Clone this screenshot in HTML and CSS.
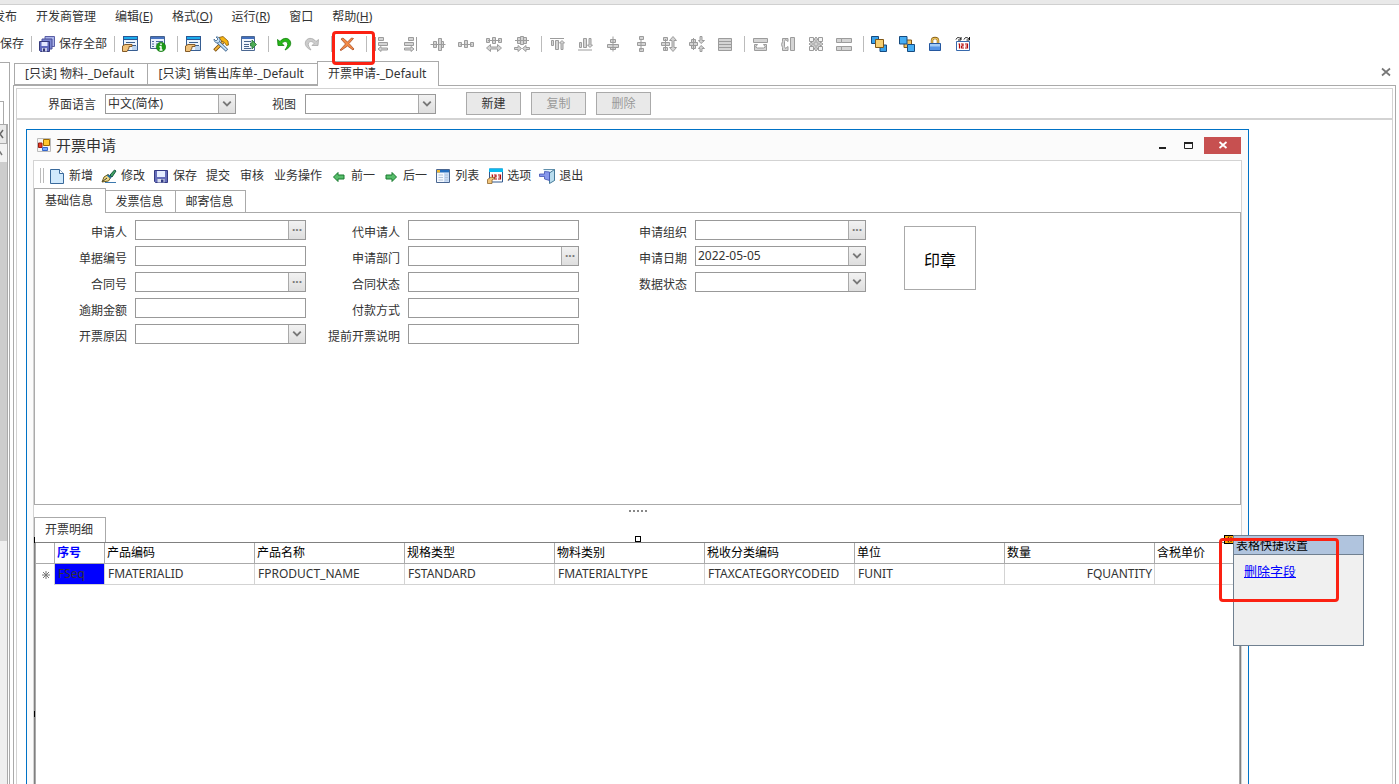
FILE: index.html
```html
<!DOCTYPE html>
<html lang="zh-CN">
<head>
<meta charset="utf-8">
<title>开票申请-_Default</title>
<link rel="stylesheet" href="styles.css">
</head>
<body>
<div class="top-strip"></div>
<nav class="menu">
  <button>发布</button><button>开发商管理</button><button>编辑(<u>E</u>)</button><button>格式(<u>O</u>)</button><button>运行(<u>R</u>)</button><button>窗口</button><button>帮助(<u>H</u>)</button>
</nav>
<div class="toolbar">
  <button class="text-tool">保存</button><i class="sep"></i>
  <button class="save-all"><svg class="icon" viewBox="0 0 16 16"><path d="M6 .5h9.500v10H6z" fill="#a9b3ea" stroke="#5b5fa5"/><path d="M3 3h10v10H3z" fill="#7d88d2" stroke="#4a4e96"/><path d="M.5 5.500h10v10H1.500l-1-1z" fill="#6069bd" stroke="#363a7c"/><path d="M2.500 6h6v4h-6z" fill="#e3e8ff"/><path d="M3 12h5v3.500H3z" fill="#c8cbe8"/><path d="M4 12.500h2v3H4z" fill="#333771"/></svg>保存全部</button><i class="sep"></i>
  <button class="tool" aria-label="属性"><svg class="icon" viewBox="0 0 16 16"><use href="#form-hand"/></svg></button>
  <button class="tool" aria-label="信息"><svg class="icon" viewBox="0 0 16 16"><path d="M.5.500h14v12H.5z" fill="#e9f1fc" stroke="#44618d"/><path d="M1 1h13v2H1z" fill="#4773c1"/><path d="M2 5.500h2M2 8h2M2 10.500h2M6 5.500h7M6 8h3" stroke="#4b699c"/><circle cx="11" cy="11" r="4.700" fill="#1c9a18" stroke="#0c6c0c" stroke-width=".6"/><path d="M11 7.500v1.800M11 10.200v4M9.500 14h3M9.500 10.700H11" stroke="#fff" stroke-width="1.500"/></svg></button><i class="sep"></i>
  <button class="tool" aria-label="表单"><svg class="icon" viewBox="0 0 16 16"><use href="#form-hand"/></svg></button>
  <button class="tool" aria-label="工具"><svg class="icon" viewBox="0 0 16 16"><path d="M1.500 14.500L10 6" stroke="#7a4b08" stroke-width="3.500"/><path d="M2 14L10 6" stroke="#f2b53a" stroke-width="1.800"/><path d="M6 1.500l4-1 5 4.500.5 4-2 .5-2-3-3.500-2z" fill="#f7b411" stroke="#80560b" stroke-width=".8"/><path d="M4 5l10 9.500" stroke="#3a638e" stroke-width="3.400"/><path d="M4 5l9.500 9" stroke="#c9e2f7" stroke-width="1.800"/><path d="M1 3l2 2 2-2-2-2c3-.5 5 2 3.500 5C4 8 1 6.500 1 3z" fill="#c9e2f7" stroke="#3a638e" stroke-width=".8"/></svg></button>
  <button class="tool" aria-label="导出"><svg class="icon" viewBox="0 0 16 16"><path d="M.5.500h13v14H.5z" fill="#f1f6fd" stroke="#4c6892"/><path d="M1 1h12v2H1z" fill="#426fbd"/><path d="M3 5.500h7M3 8.500h5M3 10.500h5M3 12.500h7" stroke="#48648e"/><path d="M9.500 7h1.500V4l4.500 4.500L11 13v-3H9.500z" fill="#4eae55" stroke="#247138" stroke-width=".8"/></svg></button><i class="sep"></i>
  <button class="tool" aria-label="撤销"><svg class="icon" viewBox="0 0 16 16"><use href="#undo" fill="#27b817" stroke="#11800c"/></svg></button>
  <button class="tool" aria-label="重做" disabled><svg class="icon" viewBox="0 0 16 16"><use href="#undo" fill="#ccc" stroke="#aaa" transform="matrix(-1 0 0 1 16 0)"/></svg></button><i class="sep"></i>
  <div class="marked"><button class="tool" aria-label="删除字段"><svg class="icon" viewBox="0 0 16 16"><path d="M2 3l2-1 4.500 4L12.500 2l2 .5-4.500 5L15 13l-1 1-5.500-4L2 14.500l-1-.5L6.500 8z" fill="#f48a45" stroke="#a94f27" stroke-width=".8"/></svg></button><i class="sep"></i></div>
  <div class="grey-tools">
  <button class="tool" aria-label="左对齐"><svg class="icon" viewBox="0 0 16 16"><path d="M1.500 1v14M4.500 1.500h5v3h-5zM4.500 6.500h9v3h-9zM7 10.500L4 13l3 2.500V14h6.500v-2H7z"/></svg></button>
  <button class="tool" aria-label="右对齐"><svg class="icon" viewBox="0 0 16 16"><path d="M14.500 1v14M6.500 1.500h5v3h-5zM2.500 6.500h9v3h-9zM9 10.500l3 2.500-3 2.500V14H2.500v-2H9z"/></svg></button>
  <button class="tool" aria-label="水平居中"><svg class="icon" viewBox="0 0 16 16"><path d="M.5 8.500h15M3.500 5.500h3v6h-3zM8.500 2.500h3v12h-3zM11.500 5.500h2v6h-2z"/></svg></button>
  <button class="tool" aria-label="水平间距"><svg class="icon" viewBox="0 0 16 16"><path d="M2.500 8.500h11M.5 6.500h3v4h-3zM6.500 4.500h3v7h-3zM12.500 6.500h3v4h-3z"/></svg></button>
  <button class="tool" aria-label="增加水平间距"><svg class="icon" viewBox="0 0 16 16"><path d="M2 4.500h12M.5 2.500h3v4h-3zM6.500 1.500h3v6h-3zM12.500 2.500h3v4h-3zM4.500 8.500L.5 12l4 3.500V13h7v2.500l4-3.500-4-3.500V11h-7z"/></svg></button>
  <button class="tool" aria-label="减少水平间距"><svg class="icon" viewBox="0 0 16 16"><path d="M1 4.500h14M3.500 1.500h3v6h-3zM6.500.500h3v8h-3zM9.500 1.500h3v6h-3zM4 9.500L7.500 12.500 4 15.500V13.500H.5v-2H4zM12 9.500l-3.500 3 3.500 3v-2h3.500v-2H12z"/></svg></button><i class="sep"></i>
  <button class="tool" aria-label="顶端对齐"><svg class="icon" viewBox="0 0 16 16"><path d="M1 2.500h14M2.500 4.500h2v5h-2zM6.500 4.500h3v9h-3zM10.500 7L13 4.500 15.500 7H14v6.500h-2V7z"/></svg></button>
  <button class="tool" aria-label="底端对齐"><svg class="icon" viewBox="0 0 16 16"><path d="M1 14h14M2.500 6.500h2v5h-2zM6.500 2.500h3v9h-3zM10.500 9l2.500 2.500L15.500 9H14V2.500h-2V9z"/></svg></button>
  <button class="tool" aria-label="垂直居中"><svg class="icon" viewBox="0 0 16 16"><path d="M8 .5v15M5.500 3.500h5v3h-5zM2.500 8.500h11v3h-11zM5.500 11.500h5v2h-5z"/></svg></button>
  <button class="tool" aria-label="垂直间距"><svg class="icon" viewBox="0 0 16 16"><path d="M8 3v11M6.500.500h4v3h-4zM4.500 6.500h8v3h-8zM6.500 12.500h4v3h-4z"/></svg></button>
  <button class="tool" aria-label="增加垂直间距"><svg class="icon" viewBox="0 0 16 16"><path d="M4.500 3v11M2.500 1.500h4v3h-4zM.5 6.500h8v3h-8zM2.500 11.500h4v3h-4zM12 .5L15.500 4.500H13v7h2.500L12 15.500 8.500 11.500H11v-7H8.500z"/></svg></button>
  <button class="tool" aria-label="减少垂直间距"><svg class="icon" viewBox="0 0 16 16"><path d="M4.500 2v12M2.500 3.500h4v3h-4zM.5 6.500h8v3h-8zM2.500 9.500h4v3h-4zM12 7.500L9.500 4.500H11v-4h2v4h2.500zM12 9.500l3.500 3H13v3h-2v-3H9.500z"/></svg></button>
  <button class="tool" aria-label="相同行高"><svg class="icon" viewBox="0 0 16 16"><path d="M1.500 2.500h13v12h-13zM1.500 5.500h13M1.500 8.500h13M1.500 11.500h13"/></svg></button><i class="sep"></i>
  <button class="tool" aria-label="相同宽度"><svg class="icon" viewBox="0 0 16 16"><path d="M1.500 2.500h14v4h-14z"/><path d="M2.500 8.500h3l-2 2.500 2 1h6l2-1-2-2.500h3v6h-12z"/></svg></button>
  <button class="tool" aria-label="相同高度"><svg class="icon" viewBox="0 0 16 16"><path d="M10.500 1.500h4v13h-4z"/><path d="M8 2.500v3L5.500 3.500l-1 2v5l1 2L8 10.500v4H2.500v-3l-1-3 1-3v-3z"/></svg></button>
  <button class="tool" aria-label="相同大小"><svg class="icon" viewBox="0 0 16 16"><path class="hollow" d="M1.500 1.500h4v4h-4zM10.500 1.500h4v4h-4zM1.500 10.500h4v4h-4zM10.500 10.500h4v4h-4z"/><path d="M8 1l2 2.500H9V7h3.500V6L15 8l-2.500 2V9H9v3.500h1L8 15l-2-2.500h1V9H3.500v1L1 8l2.500-2v1H7V3.500H6z"/></svg></button>
  <button class="tool" aria-label="分组"><svg class="icon" viewBox="0 0 16 16"><path d="M.5 2.500h5v4h-5zM5.500 2.500h10v4h-10zM.5 10.500h5v4h-5zM5.500 10.500h10v4h-10z"/></svg></button><i class="sep"></i>
  </div>
  <button class="tool" aria-label="置于顶层"><svg class="icon" viewBox="0 0 16 16"><path d="M.5.500h7v7h-7zM9 9h6.500v6.500H9z" fill="#38a1eb" stroke="#164b80"/><path d="M4.500 3.500h8v8h-8z" fill="#f6cf72" stroke="#805715"/></svg></button>
  <button class="tool" aria-label="置于底层"><svg class="icon" viewBox="0 0 16 16"><path d="M5 4h7.500v7.500H5z" fill="#f3c260" stroke="#805715"/><path d="M.5.500h7.500V8H.5zM8.500 8.500h7v7h-7z" fill="#47aef3" stroke="#164b80"/></svg></button>
  <button class="tool" aria-label="锁定"><svg class="icon" viewBox="0 0 16 16"><path d="M5 8V4.500C5 1 11 1 11 4.500V8" fill="none" stroke="#8c6417" stroke-width="2.500"/><path d="M5 8V4.500C5 1.500 11 1.500 11 4.500V8" fill="none" stroke="#efc65e" stroke-width="1.200"/><path d="M2.500 7.500h11v7h-11z" fill="#5593e5" stroke="#24579f"/><path d="M3 8h10v2.500H3z" fill="#a3cbf7"/></svg></button>
  <button class="tool" aria-label="Tab键顺序"><svg class="icon" viewBox="0 0 16 16"><path d="M1 3.500C2 1 4 1 6 3M6 1v3H3M9 3.500c1-2.500 3-2.500 5-.5M14.500 1v3h-3" fill="none" stroke="#111"/><path d="M1.500 5.500h13v9h-13z" fill="#fff" stroke="#3669ac"/><use href="#digits"/></svg></button>
</div>

<div class="workspace">
  <aside class="side"><div class="side-pane"><div class="side-head"></div><button class="side-close" aria-label="关闭面板"><svg viewBox="0 0 7 18"><path d="M3 5L0 9l3 4" fill="none" stroke="#666" stroke-width="1.500"/></svg></button><div class="scroll-up"><svg viewBox="0 0 7 18"><path d="M-2 10l2-2 2 3" fill="none" stroke="#777" stroke-width="1.500"/></svg></div><div class="thumb"></div></div></aside>
  <main class="document">
    <div class="doc-tabs"><button class="doc-tab">[只读] 物料-_Default</button><button class="doc-tab">[只读] 销售出库单-_Default</button><button class="doc-tab active">开票申请-_Default</button><button class="doc-close" aria-label="关闭"><svg viewBox="0 0 10 10"><path d="M1 1.500l8 7M9 1.500l-8 7" stroke="#777" stroke-width="1.700"/></svg></button></div>
    <div class="doc-frame"><div class="doc-body">
      <div class="language-bar">
        <label for="lang">界面语言</label><div class="combo bar-combo"><select id="lang"><option>中文(简体)</option></select><svg class="arrow" viewBox="0 0 17 18"><use href="#chevron"/></svg></div>
        <label for="view" class="view-label">视图</label><div class="combo bar-combo"><select id="view"><option></option></select><svg class="arrow" viewBox="0 0 17 18"><use href="#chevron"/></svg></div>
        <div class="bar-actions"><button>新建</button><button disabled>复制</button><button disabled>删除</button></div>
      </div>
      <div class="canvas">
        <section class="window">
          <header class="title-bar">
            <svg class="app-icon" viewBox="0 0 14 14"><path d="M.5.500h13v13H.5z" fill="#f5f5f5" stroke="#bbb"/><path d="M6.500 1.500h6v6h-6z" fill="#ffc72d" stroke="#9b6a00"/><path d="M1.500 5h3.500v4.500H1.500z" fill="#e63b24" stroke="#971a10"/><path d="M5.500 9.500h5v3h-5z" fill="#75a9ff" stroke="#3366cb"/></svg>
            <h1>开票申请</h1>
            <button class="win-button" aria-label="最小化"><svg viewBox="0 0 10 10"><path d="M2 8h7" stroke="#222" stroke-width="2"/></svg></button><button class="win-button" aria-label="最大化"><svg viewBox="0 0 10 10"><path d="M.5 2.500h8v6h-8z" fill="none" stroke="#222"/><path d="M0 3h9" stroke="#222" stroke-width="2"/></svg></button><button class="win-close" aria-label="关闭窗口"><svg viewBox="0 0 10 10"><path d="M1.500 2l7 6M8.500 2l-7 6" stroke="#fff" stroke-width="1.800"/></svg></button>
          </header>
          <div class="window-body">
            <div class="form-toolbar"><i class="grip"></i>
              <button class="with-icon"><svg class="icon" viewBox="0 0 16 16"><path d="M1.500 1.500h9l4 4v10h-13z" fill="#d0e9fc" stroke="#39699b"/><path d="M10.500 1.500v4h4" fill="#fff" stroke="#39699b"/></svg>新增</button>
              <button class="with-icon"><svg class="icon" viewBox="0 0 16 16"><path d="M4 14.500h11" stroke="#3c79ae"/><path d="M9 7l4.500-5 1.500 1-4 6z" fill="#43a463" stroke="#155944"/><path d="M1 14l2-5 4-2.500L10 9l-2.500 4z" fill="#f2dc87" stroke="#6e5b19"/><path d="M1.500 13.500L6 10" stroke="#333"/><path d="M6.500 7l3.500 3" stroke="#226da0" stroke-width="2"/></svg>修改</button>
              <button class="with-icon"><svg class="icon" viewBox="0 0 16 16"><path d="M1.500 2.500h13v12h-12l-1-1z" fill="#656db9" stroke="#343a84"/><path d="M4 3h8v6H4z" fill="#e5edff"/><path d="M4.500 11h7v3.500h-7z" fill="#dbe0ee"/><path d="M8 11.500h2.500v3H8z" fill="#323a81"/></svg>保存</button>
              <button>提交</button><button>审核</button><button>业务操作</button>
              <button class="with-icon"><svg class="icon" viewBox="0 0 16 16"><use href="#go-left"/></svg>前一</button>
              <button class="with-icon"><svg class="icon" viewBox="0 0 16 16"><use href="#go-left" transform="matrix(-1 0 0 1 16 0)"/></svg>后一</button>
              <button class="with-icon"><svg class="icon" viewBox="0 0 16 16"><path d="M1.500 1.500h13v13h-13z" fill="#f3f8ff" stroke="#4a6690"/><path d="M2 2h12v2.500H2z" fill="#226dbf"/><path d="M2 2h3v2.500H2z" fill="#f0b529"/><path d="M9 5h5v9H9z" fill="#c8dcf7"/><path d="M3.500 7H8M3.500 9.500H8M3.500 12H8M10 7h3M10 9.500h3M10 12h3" stroke="#b4c4da"/></svg>列表</button>
              <button class="with-icon"><svg class="icon" viewBox="0 0 16 16"><path d="M2.500 1h13v13h-13z" fill="#fff" stroke="#31598e"/><path d="M2 .5h14V4H2z" fill="#08baf0"/><use href="#digits" transform="translate(1 -1)"/><path d="M.5 15.500v-4L4 9l4 1-3 2v3.500z" fill="#f0c47b" stroke="#8e652c" stroke-width=".8"/></svg>选项</button>
              <button class="with-icon"><svg class="icon" viewBox="0 0 16 16"><path d="M4.500 1.500h11v11h-5" fill="#e1f2fc" stroke="#6190ac"/><path d="M15.500 1.500v11l-5 3V5z" fill="#b9ddee" stroke="#477b99"/><path d="M5.500 3.500V6H.5v2.500h5V11l5 1.500V4z" fill="#8798ed" stroke="#4051b0" stroke-width=".8"/></svg>退出</button>
            </div>
            <div class="form-tabs"><button class="active">基础信息</button><button>发票信息</button><button>邮寄信息</button></div>
            <div class="form-panel">
              <div class="fields first">
                <label for="a1">申请人</label><div class="lookup"><input id="a1"><button aria-label="选择申请人">···</button></div>
                <label for="a2">单据编号</label><input class="box" id="a2">
                <label for="a3">合同号</label><div class="lookup"><input id="a3"><button aria-label="选择合同">···</button></div>
                <label for="a4">逾期金额</label><input class="box" id="a4">
                <label for="a5">开票原因</label><div class="combo"><select id="a5"><option></option></select><svg class="arrow" viewBox="0 0 17 18"><use href="#chevron"/></svg></div>
              </div>
              <div class="fields second">
                <label for="b1">代申请人</label><input class="box" id="b1">
                <label for="b2">申请部门</label><div class="lookup"><input id="b2"><button aria-label="选择部门">···</button></div>
                <label for="b3">合同状态</label><input class="box" id="b3">
                <label for="b4">付款方式</label><input class="box" id="b4">
                <label for="b5">提前开票说明</label><input class="box" id="b5">
              </div>
              <div class="fields third">
                <label for="c1">申请组织</label><div class="lookup"><input id="c1"><button aria-label="选择组织">···</button></div>
                <label for="c2">申请日期</label><div class="combo"><select id="c2"><option>2022-05-05</option></select><svg class="arrow" viewBox="0 0 17 18"><use href="#chevron"/></svg></div>
                <label for="c3">数据状态</label><div class="combo"><select id="c3"><option></option></select><svg class="arrow" viewBox="0 0 17 18"><use href="#chevron"/></svg></div>
              </div>
              <div class="stamp">印章</div>
            </div>
            <div class="splitter"><i></i><i></i><i></i><i></i><i></i></div>
            <div class="detail-tabs"><button>开票明细</button></div>
            <div class="detail">
              <i class="handle corner"></i><i class="handle middle"></i><i class="handle side-handle"></i>
              <table>
                <colgroup><col class="c-mark"><col class="c-seq"><col class="c-data"><col class="c-data"><col class="c-data"><col class="c-data"><col class="c-data"><col class="c-data"><col class="c-data"><col></colgroup>
                <thead><tr><th></th><th class="seq">序号</th><th>产品编码</th><th>产品名称</th><th>规格类型</th><th>物料类别</th><th>税收分类编码</th><th>单位</th><th>数量</th><th>含税单价</th></tr></thead>
                <tbody><tr><td class="mark"><svg viewBox="0 0 8 8"><path d="M4 0v8M0 4h8M1 1l6 6M7 1L1 7" stroke="#777"/></svg></td><td class="selected">FSeq</td><td>FMATERIALID</td><td>FPRODUCT_NAME</td><td>FSTANDARD</td><td>FMATERIALTYPE</td><td>FTAXCATEGORYCODEID</td><td>FUNIT</td><td class="number">FQUANTITY</td><td></td></tr></tbody>
              </table>
              <button class="smart-tag" aria-label="快捷设置"><svg viewBox="0 0 8 7"><path d="M4 .5L2 3.500l2 3M6 1v1M6 5v1" fill="none" stroke="#222"/></svg></button>
              <div class="popup"><h2>表格快捷设置</h2><a href="#">删除字段</a></div>
              <div class="popup-mark"></div>
            </div>
          </div>
        </section>
      </div>
    </div></div>
  </main>
</div>

<svg class="defs" aria-hidden="true"><defs>
  <g id="form-hand"><path d="M1.500.500h14v14h-14z" fill="#edf5fd" stroke="#365d91"/><path d="M1 0h15v4H1z" fill="#2b5693"/><path d="M2 1h13v2H2z" fill="#1baced"/><path d="M4 6.500h9M9 9.500h5" stroke="#3c5f8c"/><path d="M10 10h5v4h-5z" fill="#bcd4ee"/><path d="M.5 15.500V10L3 8.500h7v2H7V12L5 15.500z" fill="#f0c27a" stroke="#845b28"/></g>
  <path id="undo" stroke-width=".8" d="M1.500 3.500l.5 6h6L6 7.500C7.500 5 10.500 5 11.500 7c.8 2-.5 4-2.500 7 4-1.500 6.500-5 5.500-8C13.300 1.500 7.500 1 4 5.500z"/>
  <path id="chevron" d="M4.500 6.500l4 4 4-4" fill="none" stroke="#777" stroke-width="2"/>
  <path id="digits" d="M4.500 7.500v5M3.500 8h1M6 8h2v2H6.500v2H9M10 8h2.500v4H10M10.500 10h2" fill="none" stroke="#b50d0d" stroke-width="1.200"/>
  <path id="go-left" d="M7 4.500L2.500 9 7 13.500V11h6V7H7z" fill="#57bd6b" stroke="#187a2f"/>
</defs></svg>
</body>
</html>
```
FILE: styles.css
```css
*, *::before, *::after { box-sizing: border-box; }
html { height: 100%; }
body { margin: 0; height: 100%; display: flex; flex-direction: column; overflow: hidden; background: #fff; color: #333; font: 12px/18px "Noto Sans", "Noto Sans CJK SC", sans-serif; }
button, input, select { font: inherit; color: inherit; margin: 0; padding: 0; border: 0; border-radius: 0; background: none; }
button { white-space: nowrap; flex: none; }
svg { display: block; flex: none; }
.defs { width: 0; height: 0; position: absolute; }
.icon { width: 16px; height: 16px; }

.top-strip { flex: none; height: 5px; background: #e9e9e9; border-bottom: 1px solid #d0d0d0; }
.menu { flex: none; display: flex; gap: 19px; margin-left: -7px; padding-top: 3px; height: 25px; }
.menu button { height: 18px; }
.toolbar { flex: none; height: 31px; padding-bottom: 4px; display: flex; align-items: center; }
.grey-tools { display: flex; align-items: center; }
.grey-tools path { fill: #d4d4d4; stroke: #9c9c9c; }
.grey-tools .hollow { fill: #f4f4f4; }
.tool { width: 28px; height: 26px; display: flex; align-items: center; justify-content: center; }
.text-tool { width: 26px; text-align: left; }
.save-all { width: 76px; padding-left: 6px; display: flex; gap: 4px; align-items: center; }
.sep { flex: none; width: 7px; height: 16px; background: linear-gradient(#bbb, #bbb) 5px 0 / 1px 16px no-repeat; }
.marked { position: relative; display: flex; align-items: center; }
.marked::after { content: ""; position: absolute; left: -1px; top: 0; width: 43px; height: 34px; border: 3px solid #fb2112; border-radius: 4px; z-index: 2; }

.workspace { flex: 1; min-height: 0; display: flex; padding-right: 3px; }
.side { flex: none; width: 10px; margin-top: 1px; margin-right: 3px; border: 1px solid #aaa; border-left: 0; border-bottom: 0; }
.side-pane { height: 100%; width: 8px; background: #efefef; border-right: 1px solid #aaa; display: flex; flex-direction: column; }
.side-head { flex: none; height: 61px; margin-right: -1px; background: linear-gradient(#aaa, #aaa) 0 38px / 4px 1px no-repeat, linear-gradient(#aaa, #aaa) 3px 38px / 1px 23px no-repeat #fff; }
.side-close { height: 20px; border: 1px solid #aaa; border-left: 0; background: #e9e9e9; }
.side svg { width: 7px; height: 18px; }
.scroll-up { flex: none; height: 18px; background: #f3f3f3; }
.thumb { flex: 0 1 379px; background: #cdcdcd; }

.document { flex: 1; min-width: 0; display: flex; flex-direction: column; }
.doc-tabs { flex: none; height: 24px; display: flex; align-items: flex-end; padding-left: 1px; position: relative; z-index: 1; }
.doc-tab { height: 22px; padding: 0 13px 0 10px; border: 1px solid #aaa; margin-right: -1px; background: #fff; }
.doc-tab.active { height: 25px; padding: 0 12px 1px 10px; border-bottom: 0; margin-bottom: -1px; }
.doc-close { margin-left: auto; width: 10px; height: 10px; margin-right: 5px; margin-bottom: 8px; }
.doc-close svg { width: 10px; }
.doc-frame { flex: 1; min-height: 0; border: 1px solid #aaa; border-bottom: 0; padding: 2px 2px 0; }
.doc-body { height: 100%; border: 1px solid #d3d3d3; border-bottom: 0; display: flex; flex-direction: column; }
.language-bar { flex: none; height: 31px; border-bottom: 2px solid #d3d3d3; display: flex; align-items: center; padding-left: 31px; }
.language-bar label { margin-right: 9px; padding-top: 2px; }
.language-bar .view-label { margin-left: 36px; }
.bar-combo { width: 131px; }
.bar-actions { display: flex; gap: 10px; margin-left: 30px; }
.bar-actions button { width: 55px; height: 23px; border: 1px solid #aaa; background: #e9e9e9; }
.bar-actions button:disabled { color: #999; }
.combo { position: relative; height: 20px; border: 1px solid #999; background: #fff; }
.combo select { appearance: none; width: 100%; height: 18px; line-height: 18px; padding-left: 2px; display: block; outline: 0; }
.arrow { position: absolute; right: 0; top: 0; width: 17px; height: 18px; border-left: 1px solid #aaa; background: linear-gradient(#f2f2f2, #dedede); pointer-events: none; }

.canvas { flex: 1; min-height: 0; padding: 9px 143px 0 9px; display: flex; }
.window { flex: 1; min-width: 0; border: 1px solid #0072c6; border-bottom: 0; padding: 0 6px; background: #fbfbfb; display: flex; flex-direction: column; }
.title-bar { flex: none; height: 30px; display: flex; align-items: center; padding: 0 1px 0 4px; }
.app-icon { width: 14px; height: 14px; margin-right: 5px; }
.title-bar h1 { margin: 0 auto 0 0; font-size: 15px; font-weight: 400; line-height: 20px; }
.win-button { width: 27px; height: 17px; display: flex; align-items: center; justify-content: center; }
.title-bar button svg { width: 10px; height: 10px; }
.win-close { width: 37px; height: 17px; margin-left: 2px; background: #c75050; display: flex; align-items: center; justify-content: center; }
.window-body { flex: 1; min-height: 0; border: 1px solid #d3d3d3; border-bottom: 0; background: #fff; display: flex; flex-direction: column; }
.form-toolbar { flex: none; height: 27px; padding: 2px 0 0 6px; display: flex; align-items: center; }
.form-toolbar button { padding: 0 5px; }
.form-toolbar .with-icon { padding: 0 4px; display: flex; align-items: center; gap: 4px; }
.grip { width: 4px; height: 15px; border: 1px solid #bbb; border-width: 0 1px; margin-right: 1px; }
.form-tabs { flex: none; height: 24px; display: flex; align-items: flex-end; position: relative; z-index: 1; }
.form-tabs button { width: 71px; height: 22px; margin-right: -1px; padding-right: 2px; border: 1px solid #aaa; border-bottom: 0; background: #fff; }
.form-tabs button.active { height: 25px; width: 72px; margin-bottom: -1px; }
.form-panel { flex: 0 0 293px; border: 1px solid #aaa; padding-top: 7px; display: flex; align-items: flex-start; }
.fields { display: grid; grid-auto-rows: 20px; gap: 6px 8px; }
.first { grid-template-columns: 92px 171px; }
.second { grid-template-columns: 94px 171px; }
.third { grid-template-columns: 108px 171px; }
.fields label { text-align: right; padding-top: 4px; }
.box { border: 1px solid #999; width: 100%; height: 20px; padding: 0 2px; }
.lookup { display: flex; border: 1px solid #999; height: 20px; }
.lookup input { flex: 1; min-width: 0; padding: 0 2px; }
.lookup button { width: 17px; border-left: 1px solid #aaa; background: linear-gradient(#f2f2f2, #dedede); line-height: 16px; font-weight: 700; color: #777; }
.stamp { margin: 6px 0 0 38px; width: 72px; height: 64px; border: 1px solid #aaa; display: flex; align-items: center; justify-content: center; font-size: 16px; padding-top: 3px; color: #000; }
.splitter { flex: none; height: 12px; display: flex; gap: 2px; justify-content: center; padding-top: 5px; }
.splitter i { width: 2px; height: 2px; background: #888; }
.detail-tabs { flex: none; height: 25px; }
.detail-tabs button { width: 72px; height: 25px; padding-right: 2px; border: 1px solid #aaa; border-bottom: 0; }
.detail { flex: 1; min-height: 0; position: relative; border: 1px solid #808080; border-bottom: 0; box-shadow: inset 1px 0 #aaa, inset -1px 0 #aaa; padding: 0 1px; }
.detail table { width: 100%; table-layout: fixed; border-collapse: separate; border-spacing: 0; }
.c-mark { width: 19px; }
.c-seq { width: 50px; }
.c-data { width: 150px; }
th, td { height: 21px; padding: 0 2px; font-weight: 400; text-align: left; white-space: nowrap; overflow: hidden; border-right: 1px solid #d3d3d3; border-bottom: 1px solid #d3d3d3; }
th { color: #000; border-color: #aaa; }
th.seq { color: #00f; font-weight: 700; }
td { padding-left: 3px; }
th:last-child, td:last-child { border-right: 0; }
.mark { border-bottom: 0; }
.mark svg { width: 8px; height: 8px; margin: auto; }
td.selected { background: #00f; }
td.number { text-align: right; }
.handle { position: absolute; z-index: 3; background: #000; width: 1px; height: 6px; }
.corner { left: -1px; top: -6px; }
.middle { left: 50%; top: -7px; margin-left: -3px; width: 6px; height: 6px; border: 1px solid #000; background: #fff; }
.side-handle { left: -1px; top: 168px; }
.smart-tag { position: absolute; right: 6px; top: -8px; width: 10px; height: 9px; background: #ffa500; border: 1px solid #000; }
.smart-tag svg { width: 8px; height: 7px; }
.popup { position: absolute; right: -124px; top: -8px; width: 131px; height: 111px; background: #f0f0f0; border: 1px solid #708090; }
.popup h2 { margin: 0 0 7px; padding-left: 2px; height: 19px; line-height: 20px; font-size: 12px; font-weight: 400; color: #000; background: #b0c4de; border-bottom: 1px solid #708090; }
.popup a { margin-left: 10px; color: #00f; font-size: 13px; }
.popup-mark { position: absolute; right: -99px; top: -5px; width: 120px; height: 64px; border: 3px solid #fb2112; border-radius: 4px; pointer-events: none; }
```
